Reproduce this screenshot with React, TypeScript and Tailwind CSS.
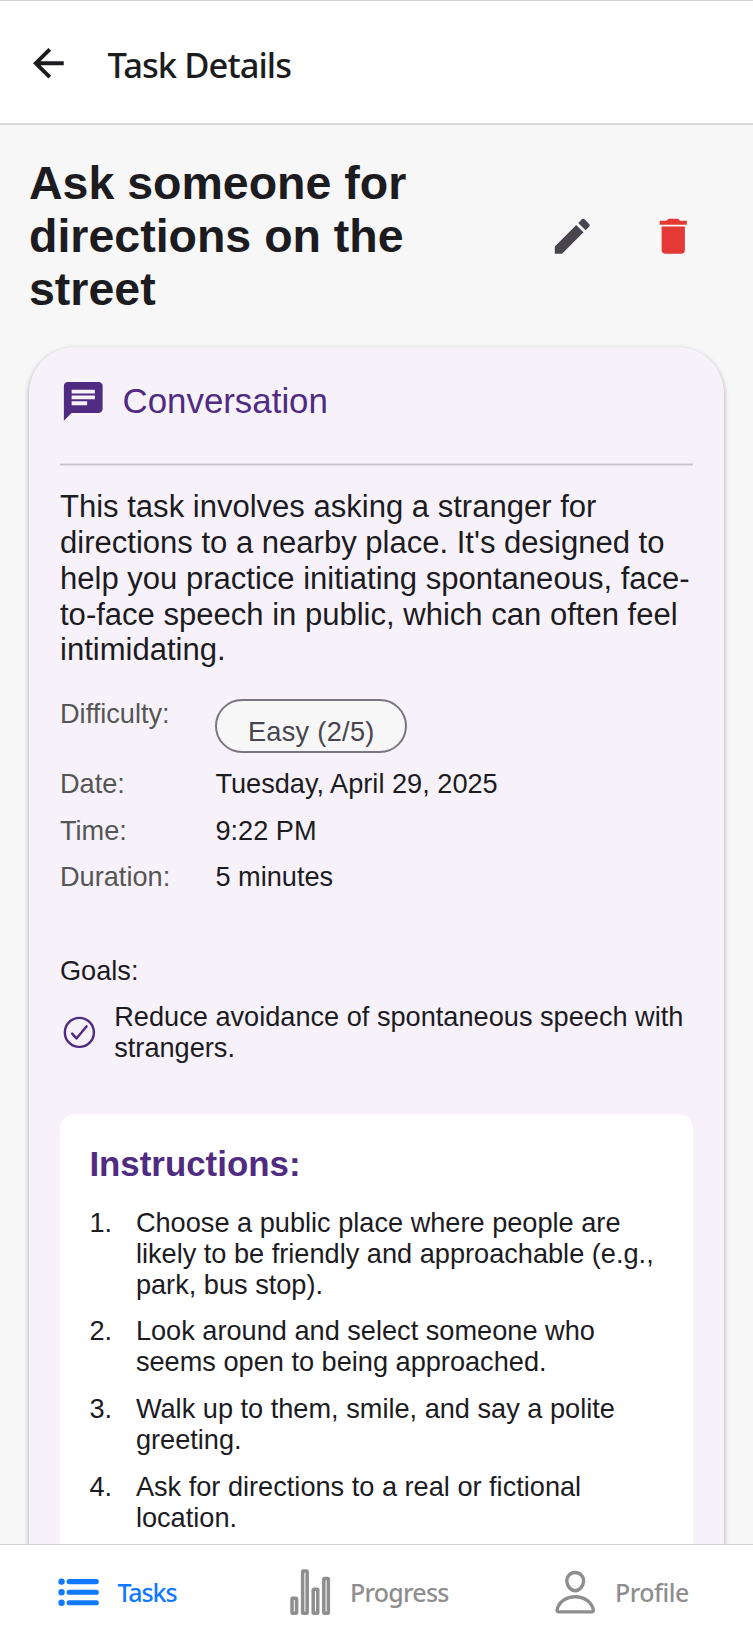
import React from "react";

const steps = [
  "Choose a public place where people are likely to be friendly and approachable (e.g., park, bus stop).",
  "Look around and select someone who seems open to being approached.",
  "Walk up to them, smile, and say a polite greeting.",
  "Ask for directions to a real or fictional location.",
];

const details = [
  { label: "Date:", value: "Tuesday, April 29, 2025" },
  { label: "Time:", value: "9:22 PM" },
  { label: "Duration:", value: "5 minutes" },
];

function MaterialIcon({ d, className }: { d: string; className: string }) {
  return (
    <svg viewBox="0 0 24 24" fill="currentColor" className={"size-[46.5px] shrink-0 " + className}>
      <path d={d} />
    </svg>
  );
}

function OutlineIcon({ className, children }: { className: string; children: React.ReactNode }) {
  return (
    <svg
      viewBox="0 0 512 512"
      fill="none"
      stroke="currentColor"
      strokeLinecap="round"
      strokeLinejoin="round"
      className={"shrink-0 " + className}
    >
      {children}
    </svg>
  );
}

function Header() {
  return (
    <header className="flex h-[125px] shrink-0 items-start border-t border-b-2 border-t-[#d2d2d2] border-b-[#d8d8d8] bg-white pl-[25px]">
      <MaterialIcon
        className="mt-[38.7px] text-[#1c1b1f]"
        d="M20 11V13H8L13.5 18.5L12.08 19.92L4.16 12L12.08 4.08L13.5 5.5L8 11H20Z"
      />
      <h1 className="mt-[40px] ml-[36px] font-['Noto_Sans','Open_Sans',sans-serif] text-[34.5px] leading-[48px] font-medium tracking-[-0.93px] whitespace-nowrap text-[#1c1c1e]">
        Task Details
      </h1>
    </header>
  );
}

function TitleRow() {
  return (
    <div className="flex h-[159px] items-center">
      <h2 className="w-[410px] text-[46.5px] leading-[53px] font-bold">
        Ask someone for directions on the street
      </h2>
      <MaterialIcon
        className="ml-[109.5px] text-[#49454f]"
        d="M20.71 7.04C21.1 6.65 21.1 6 20.71 5.63L18.37 3.29C18 2.9 17.35 2.9 16.96 3.29L15.12 5.12L18.87 8.87M3 17.25V21H6.75L17.81 9.93L14.06 6.18L3 17.25Z"
      />
      <MaterialIcon
        className="ml-[54.5px] text-[#e53935]"
        d="M19 4H15.5L14.5 3H9.5L8.5 4H5V6H19M6 19A2 2 0 0 0 8 21H16A2 2 0 0 0 18 19V7H6V19Z"
      />
    </div>
  );
}

function Instructions() {
  return (
    <section className="mt-[51px] h-[600px] rounded-[15.5px] bg-white px-[29.4px] pt-[30px]">
      <h3 className="text-[34.875px] leading-[40px] font-bold text-[#4f2b81]">Instructions:</h3>
      <ol className="mt-[22.5px] flex flex-col gap-[15.7px]">
        {steps.map((step, i) => (
          <li key={step} className="flex">
            <span className="w-[46.5px] shrink-0">{i + 1}.</span>
            <span className="w-[528px]">{step}</span>
          </li>
        ))}
      </ol>
    </section>
  );
}

function TaskCard() {
  return (
    <article className="mt-[31px] h-[1400px] shrink-0 rounded-[46.5px] bg-[#f7f2fa] px-[31px] pt-[31px] text-[27.16px] leading-[31px] shadow-[0_2px_5px_rgba(0,0,0,0.34)]">
      <div className="flex items-center text-[#4f2b81]">
        <MaterialIcon
          className=""
          d="M20 2H4C2.9 2 2 2.9 2 4V22L6 18H20C21.1 18 22 17.1 22 16V4C22 2.9 21.1 2 20 2ZM6 6H18V8H6ZM6 9H18V11H6ZM14 14H6V12H14Z"
        />
        <span className="ml-[16px] text-[34.875px] leading-[40px]">Conversation</span>
      </div>
      <div className="mt-[38.5px] h-[3px] border-y border-[#e1dce5] bg-[#c8c2ce]" />
      <p className="mt-[23px] text-[31.04px] leading-[35.84px]">
        This task involves asking a stranger for directions to a nearby place. It's designed to help
        you practice initiating spontaneous, face-to-face speech in public, which can often feel
        intimidating.
      </p>
      <dl className="mt-[30px] flex flex-col gap-[15.5px]">
        <div className="flex h-[54.5px]">
          <dt className="w-[155.4px] text-[#555555]">Difficulty:</dt>
          <dd className="mt-[1px] flex h-[54px] items-start rounded-[27px] border-2 border-[#79747e] bg-[#f7f7f7] px-[30.5px] pt-[15px] tracking-[0.3px] whitespace-nowrap text-[#49454f]">
            Easy (2/5)
          </dd>
        </div>
        {details.map((row) => (
          <div key={row.label} className="flex">
            <dt className="w-[155.4px] text-[#555555]">{row.label}</dt>
            <dd>{row.value}</dd>
          </div>
        ))}
      </dl>
      <h3 className="mt-[62.5px]">Goals:</h3>
      <div className="mt-[15.5px] flex items-center">
        <OutlineIcon className="size-[38.75px] text-[#4f2b81]">
          <circle strokeWidth="32" cx="256" cy="256" r="192" />
          <path strokeWidth="32" d="M352 176L217.6 336L160 272" />
        </OutlineIcon>
        <p className="ml-[15.5px] w-[578px]">Reduce avoidance of spontaneous speech with strangers.</p>
      </div>
      <Instructions />
    </article>
  );
}

function TabBar() {
  return (
    <nav className="grid h-[89px] shrink-0 grid-cols-3 border-t border-[#d2d2d2] bg-white font-['Noto_Sans','Open_Sans',sans-serif] text-[25px] leading-[34px] font-medium text-[#8e8e8f]">
      <a className="flex items-start gap-[15.5px] pt-[23px] pl-[53.5px] text-[#1079ff]">
        <OutlineIcon className="size-[48.4px]">
          <path strokeWidth="54" d="M160 144H448M160 256H448M160 368H448" />
          <circle strokeWidth="36" cx="80" cy="144" r="16" />
          <circle strokeWidth="36" cx="80" cy="256" r="16" />
          <circle strokeWidth="36" cx="80" cy="368" r="16" />
        </OutlineIcon>
        <span className="mt-[7px] tracking-[-1.1px]">Tasks</span>
      </a>
      <a className="flex items-start gap-[15.5px] pt-[23px] pl-[35px]">
        <OutlineIcon className="size-[48.4px]">
          <g strokeWidth="37">
            <rect x="64" y="320" width="48" height="160" rx="8" />
            <rect x="288" y="224" width="48" height="256" rx="8" />
            <rect x="400" y="112" width="48" height="368" rx="8" />
            <rect x="176" y="32" width="48" height="448" rx="8" />
          </g>
        </OutlineIcon>
        <span className="mt-[7px] tracking-[-0.75px]">Progress</span>
      </a>
      <a className="flex items-start gap-[16px] pt-[23px] pl-[48.5px]">
        <OutlineIcon className="size-[48.4px]">
          <g strokeWidth="36">
            <path d="M344 144c-3.92 52.87-44 96-88 96s-84.15-43.12-88-96c-4-55 35-96 88-96s92 42 88 96z" />
            <path d="M256 304c-87 0-175.3 48-191.64 138.6C62.39 453.52 68.57 464 80 464h352c11.44 0 17.62-10.48 15.65-21.4C431.3 352 343 304 256 304z" />
          </g>
        </OutlineIcon>
        <span className="mt-[7px] tracking-[-0.5px]">Profile</span>
      </a>
    </nav>
  );
}

export default function App() {
  return (
    <div className="flex h-[1633px] w-full flex-col overflow-hidden bg-[#f7f7f7] font-['Liberation_Sans',Arial,sans-serif] text-[#1c1b1f]">
      <Header />
      <main className="min-h-0 flex-1 overflow-hidden px-[29px] pt-[32px]">
        <TitleRow />
        <TaskCard />
      </main>
      <TabBar />
    </div>
  );
}
